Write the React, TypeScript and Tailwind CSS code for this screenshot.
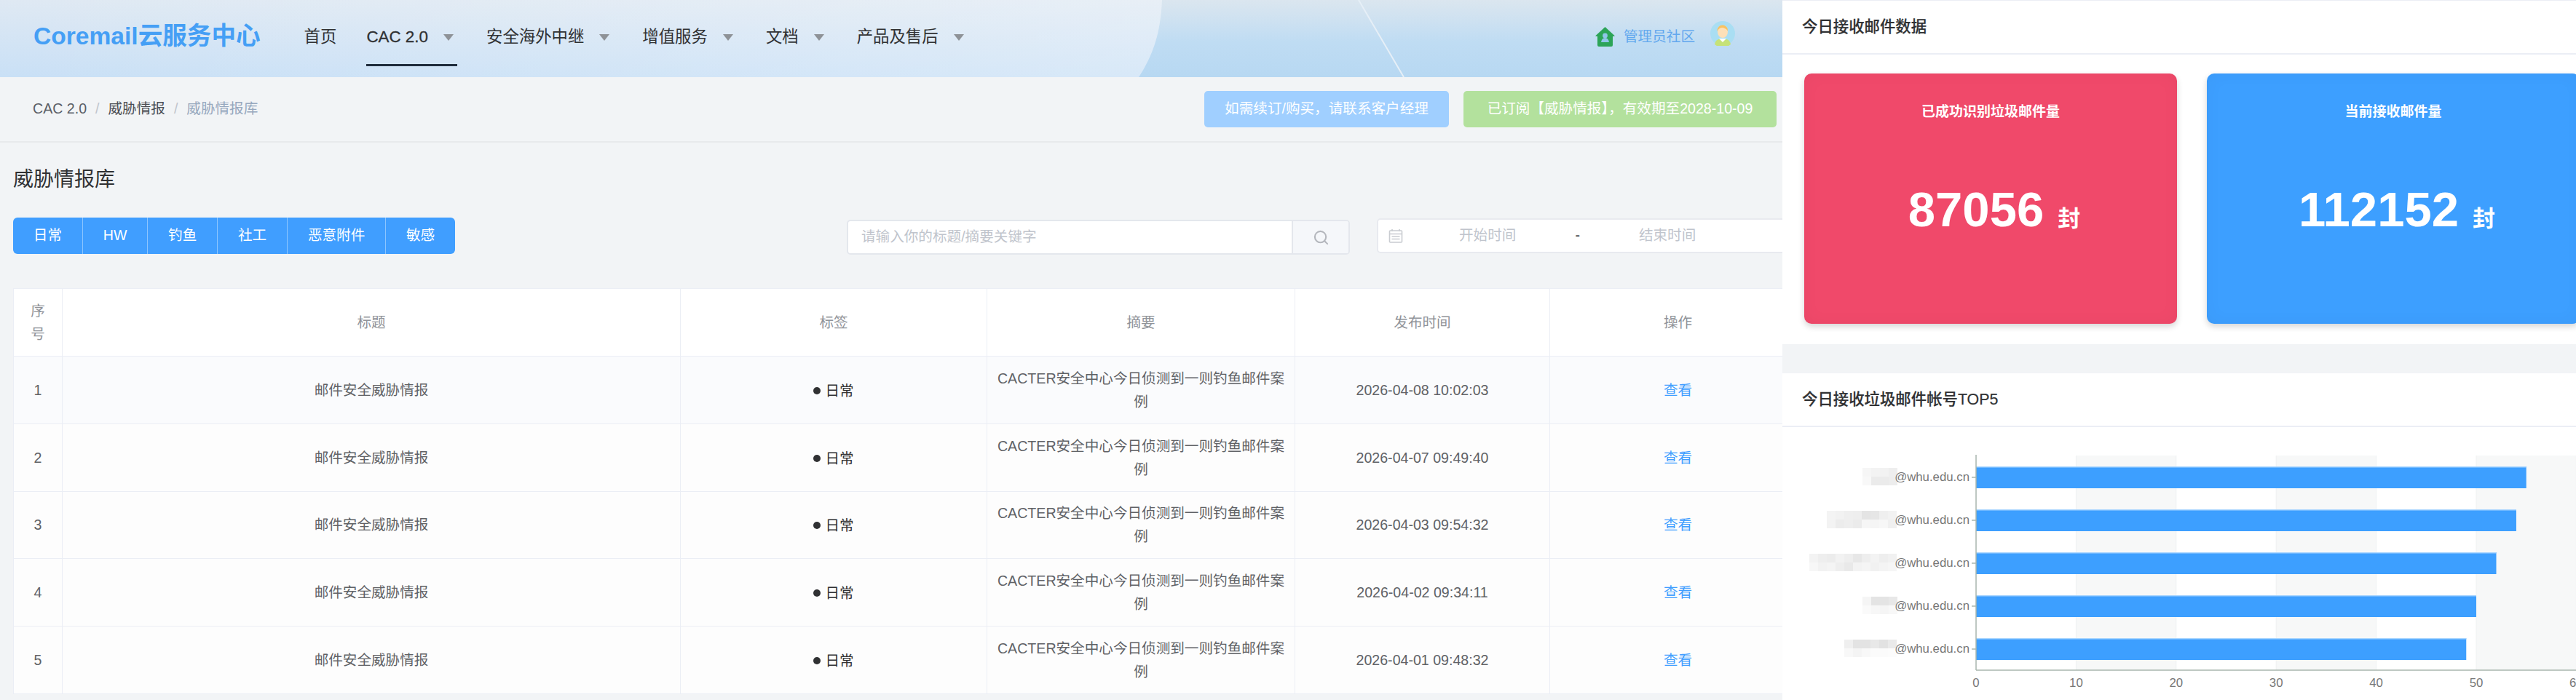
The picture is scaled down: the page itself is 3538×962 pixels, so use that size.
import { Search } from 'lucide-react';

const fontStack = '[font-family:"Liberation_Sans","Noto_Sans_CJK_SC",sans-serif]';

const navItems = ['安全海外中继', '增值服务', '文档', '产品及售后'];
const tagButtons = ['日常', 'HW', '钓鱼', '社工', '恶意附件', '敏感'];

const rows = [
  { id: 1, time: '2026-04-08 10:02:03' },
  { id: 2, time: '2026-04-07 09:49:40' },
  { id: 3, time: '2026-04-03 09:54:32' },
  { id: 4, time: '2026-04-02 09:34:11' },
  { id: 5, time: '2026-04-01 09:48:32' },
];

const chartOrigin = 266;
const unit = 13.74;
const chartBars = [
  { y: 54, value: 55, mosaicX: 110, mosaic: [['#f6f6f6', '#f3f3f3', '#f2f2f2', '#eeeeee'], ['#f8f8f8', '#ebebeb', '#ebebeb', '#ededed']] },
  { y: 113, value: 54, mosaicX: 61, mosaic: [['#f4f4f4', '#f2f2f2', '#efefef', '#eeeeee', '#e4e4e4', '#e6e6e6', '#efefef', '#f2f2f2'], ['#f3f3f3', '#ececec', '#eeeeee', '#ebebeb', '#f6f6f6', '#f5f5f5', '#f7f7f7', '#f0f0f0']] },
  { y: 172, value: 52, mosaicX: 37, mosaic: [['#f3f3f3', '#eeeeee', '#ececec', '#f2f2f2', '#eeeeee', '#e7e7e7', '#eeeeee', '#f3f3f3', '#eeeeee', '#f1f1f1'], ['#f7f7f7', '#f2f2f2', '#f4f4f4', '#eeeeee', '#e9e9e9', '#f3f3f3', '#f5f5f5', '#f1f1f1', '#f4f4f4', '#f6f6f6']] },
  { y: 231, value: 50, mosaicX: 110, mosaic: [['#f5f5f5', '#e4e4e4', '#e4e4e4', '#e8e8e8'], ['#fafafa', '#f7f7f7', '#f5f5f5', '#f8f8f8']] },
  { y: 290, value: 49, mosaicX: 85, mosaic: [['#efefef', '#e3e3e3', '#e3e3e3', '#e8e8e8', '#e2e2e2', '#eaeaea'], ['#f8f8f8', '#f4f4f4', '#f8f8f8', '#fbfbfb', '#fbfbfb', '#fcfcfc']] },
];

function Caret() {
  return <span className="ml-[21px] h-0 w-0 border-x-[7px] border-t-[9px] border-x-transparent border-t-[#8e9297]" />;
}

function CommunityIcon() {
  return (
    <svg width="27" height="27" viewBox="0 0 27 27">
      <path d="M13.5 0L27 12.5L24 13V25a2 2 0 0 1-2 2H5a2 2 0 0 1-2-2V13L0 12.5Z" fill="#2ca457" />
      <circle cx="13.5" cy="12" r="3.4" fill="#8fc6e8" />
      <path d="M8 21c.6-4 2.6-6 5.5-6s4.900 2 5.500 6Z" fill="#8fc6e8" />
    </svg>
  );
}

function Avatar() {
  return (
    <svg width="34" height="34" viewBox="0 0 34 34" className="-mt-[8px]">
      <circle cx="17" cy="17" r="17" fill="#a9def3" />
      <path d="M6 32c1-6 5-8 11-8s10 2 11 8a17 17 0 0 1-22 0Z" fill="#c6e278" />
      <path d="M12 24h10l-5 5Z" fill="#fff" />
      <ellipse cx="17" cy="15" rx="7" ry="8" fill="#fde0b8" />
      <path d="M9.500 14c0-6 4-9 8-8.500 4 .5 7 4 6.500 8-2-3-5-4.500-8-4.500-3 .5-5 2-6.500 5Z" fill="#f8c260" />
    </svg>
  );
}

function CalendarIcon() {
  return (
    <svg width="20" height="20" viewBox="0 0 20 20" fill="none" stroke="#c9ccd1" strokeWidth="1.600">
      <rect x="1.500" y="3" width="17" height="16" rx="1" />
      <path d="M5 1v3M15 1v3M1.500 7.500h17M4.500 11h11M4.500 14.500h11" />
    </svg>
  );
}

function TopBar() {
  return (
    <header className="relative flex h-[106px] items-start overflow-hidden bg-gradient-to-b from-[#dfe9f3] to-[#c9e0f6] pl-[46px] pr-[65px]">
      <svg className="absolute inset-0" width="2448" height="106" viewBox="0 0 2448 106">
        <defs>
          <linearGradient id="fadeArea" x1="0" y1="0" x2="1" y2="0">
            <stop offset="0" stopColor="#ffffff" stopOpacity="0" />
            <stop offset="1" stopColor="#ffffff" stopOpacity="0.28" />
          </linearGradient>
          <linearGradient id="blueArea" x1="0" y1="0" x2="0" y2="1">
            <stop offset="0" stopColor="#dbe6ef" />
            <stop offset="0.55" stopColor="#bfdcf3" />
            <stop offset="1" stopColor="#b7d8f2" />
          </linearGradient>
        </defs>
        <path d="M1596 0C1594 45 1584 75 1564 106H2448V0Z" fill="url(#blueArea)" />
        <path d="M0 0H1596C1594 45 1584 75 1564 106H0Z" fill="url(#fadeArea)" />
        <path d="M1866 0L1928 106" stroke="#e6eff7" strokeWidth="2" fill="none" />
      </svg>
      <div className="relative flex w-full items-start">
        <div className="mt-[29px] text-[33.6px] leading-[42px] font-bold text-[#459ff5]">Coremail云服务中心</div>
        <nav className="ml-[60px] flex gap-[41px] text-[22.4px] text-[#303133]">
          <a className="flex h-[91px] items-center pt-[11px]">首页</a>
          <a className="flex h-[91px] items-center border-b-[3px] border-[#1f2d3d] pt-[14px] pr-[5px] font-medium [-webkit-text-stroke:0.3px_#303133]">
            CAC 2.0
            <Caret />
          </a>
          {navItems.map((item) => (
            <a key={item} className="-ml-[1px] flex h-[91px] items-center pt-[11px] pr-[5px]">
              {item}
              <Caret />
            </a>
          ))}
        </nav>
        <div className="mt-[37px] ml-auto flex items-start">
          <CommunityIcon />
          <span className="ml-[12px] text-[19.6px] leading-[27px] text-[#62a8ee]">管理员社区</span>
          <span className="ml-[21px]">
            <Avatar />
          </span>
        </div>
      </div>
    </header>
  );
}

function BreadcrumbBar() {
  return (
    <div className="flex h-[90px] items-center border-b-2 border-[#e8eaec] pr-[8px] pl-[45px] text-[19.6px]">
      <span className="text-[#5a5e66]">CAC 2.0</span>
      <span className="mx-[12px] text-[#c0c4cc]">/</span>
      <span className="text-[#4a4d53]">威胁情报</span>
      <span className="mx-[12px] text-[#c0c4cc]">/</span>
      <span className="text-[#97a8be]">威胁情报库</span>
      <div className="ml-auto flex gap-[20px] text-white">
        <div className="flex h-[50px] w-[336px] items-center justify-center rounded-[5px] bg-[#a0cfff]">如需续订/购买，请联系客户经理</div>
        <div className="flex h-[50px] w-[430px] items-center justify-center rounded-[5px] bg-[#b3e19d]">已订阅【威胁情报】，有效期至2028-10-09</div>
      </div>
    </div>
  );
}

function FilterRow() {
  return (
    <div className="mt-[34px] flex w-[2600px] items-start text-[19.6px]">
      <div className="flex h-[50px] w-[607px] shrink-0 overflow-hidden rounded-[6px] bg-[#409eff] text-white">
        {tagButtons.map((tag, i) => (
          <div
            key={tag}
            className={`flex h-full flex-auto items-center justify-center ${i < tagButtons.length - 1 ? 'border-r border-[#8cc5ff]' : ''}`}
          >
            {tag}
          </div>
        ))}
      </div>
      <div className="mt-[3px] ml-[538px] flex h-[48px] w-[691px] shrink-0 overflow-hidden rounded-[5px] border-2 border-[#e4e7ed] bg-white">
        <div className="flex flex-1 items-center pl-[18px] text-[#c0c4cc]">请输入你的标题/摘要关键字</div>
        <div className="flex w-[78px] items-center justify-center border-l-2 border-[#e4e7ed] bg-[#f5f7fa] text-[#b4b7bd]">
          <Search size={23} strokeWidth={2.2} />
        </div>
      </div>
      <div className="mt-[1px] ml-[37px] flex h-[48px] w-[700px] shrink-0 items-center rounded-[5px] border-2 border-[#e8eaef] bg-white pl-[14px] text-[#c0c4cc]">
        <CalendarIcon />
        <span className="ml-[77px]">开始时间</span>
        <span className="ml-[81px] text-[#303133]">-</span>
        <span className="ml-[81px]">结束时间</span>
      </div>
    </div>
  );
}

function IntelTable() {
  const th = 'border border-[#ebeef5] px-[14px] font-normal text-[#909399]';
  const cell = 'border border-[#ebeef5] px-[10px] text-center';
  return (
    <table className="mt-[46px] w-[2462px] table-fixed border-collapse bg-white text-[19.6px] leading-[32px]">
      <colgroup>
        <col className="w-[67px]" />
        <col className="w-[849px]" />
        <col className="w-[421px]" />
        <col className="w-[423px]" />
        <col className="w-[350px]" />
        <col className="w-[352px]" />
      </colgroup>
      <thead>
        <tr className="h-[93px]">
          <th className={th}>序号</th>
          <th className={th}>标题</th>
          <th className={th}>标签</th>
          <th className={th}>摘要</th>
          <th className={th}>发布时间</th>
          <th className={th}>操作</th>
        </tr>
      </thead>
      <tbody>
        {rows.map((row) => (
          <tr key={row.id} className={`h-[92.8px] text-[#606266] ${row.id === 1 ? 'bg-[#fafbfd]' : 'bg-[#fdfdfd]'}`}>
            <td className={cell}>{row.id}</td>
            <td className={cell}>邮件安全威胁情报</td>
            <td className={cell}>
              <span className="inline-flex items-center text-[#303133]">
                <span className="mr-[6px] h-[10px] w-[10px] rounded-full bg-[#303133]" />
                日常
              </span>
            </td>
            <td className={cell}>CACTER安全中心今日侦测到一则钓鱼邮件案例</td>
            <td className={cell}>{row.time}</td>
            <td className={cell}>
              <a className="text-[#409eff]">查看</a>
            </td>
          </tr>
        ))}
      </tbody>
    </table>
  );
}

function StatCard({ label, value, color }: { label: string; value: string; color: string }) {
  return (
    <div className={`flex h-[344px] w-[512px] shrink-0 flex-col items-center rounded-[10px] pt-[39px] text-white shadow-[0_4px_8px_rgba(0,0,0,0.16),inset_0_0_24px_rgba(0,0,0,0.035)] ${color}`}>
      <div className="text-[19px] leading-[28px] font-bold">{label}</div>
      <div className="mt-[80px] ml-[10px] flex items-baseline font-bold">
        <span className="text-[67px] leading-[80px]">{value}</span>
        <span className="ml-[19px] text-[31px]">封</span>
      </div>
    </div>
  );
}

function TopFiveChart() {
  const xTicks = [0, 10, 20, 30, 40, 50, 60];
  return (
    <svg width="1090" height="372" viewBox="0 0 1090 372" className="block">
      {[1, 3, 5].map((n) => (
        <rect key={n} x={chartOrigin + n * 137.4} y="39" width="137.4" height="295" fill="#f7f8f8" />
      ))}
      {xTicks.slice(1).map((t) => (
        <line key={t} x1={chartOrigin + t * unit} x2={chartOrigin + t * unit} y1="39" y2="334" stroke="#eff1f2" />
      ))}
      {chartBars.map((bar) => (
        <g key={bar.y}>
          {bar.mosaic.map((cells, r) =>
            cells.map((fill, c) => (
              <rect key={`${r}-${c}`} x={bar.mosaicX + c * 12} y={bar.y + 2 + r * 12} width="12" height="12" fill={fill} />
            )),
          )}
          <text x="257" y={bar.y + 20} textAnchor="end" fontSize="16.8" fill="#777">
            @whu.edu.cn
          </text>
          <line x1="260" x2="266" y1={bar.y + 15} y2={bar.y + 15} stroke="#a9b6ae" strokeWidth="1.500" />
          <rect x={chartOrigin} y={bar.y} width={bar.value * unit} height="30" fill="#3d9fff" />
          <rect x={chartOrigin} y={bar.y} width={bar.value * unit} height="1.500" fill="#a6d4ff" />
        </g>
      ))}
      <line x1={chartOrigin} x2={chartOrigin} y1="38" y2="334" stroke="#a9b6ae" strokeWidth="1.500" />
      <line x1={chartOrigin} x2="1090" y1="334" y2="334" stroke="#a9b6ae" strokeWidth="1.500" />
      {xTicks.map((t) => (
        <text key={t} x={chartOrigin + t * unit} y="357" textAnchor="middle" fontSize="16.8" fill="#777">
          {t}
        </text>
      ))}
    </svg>
  );
}

function SideHeading({ children }: { children: string }) {
  return (
    <div className="flex h-[74px] items-center border-b-2 border-[#ebeef5] pl-[27px] text-[21.4px] font-medium text-[#303133] [-webkit-text-stroke:0.2px_#303133]">
      {children}
    </div>
  );
}

export default function App() {
  return (
    <div className={`flex h-[962px] w-[3538px] overflow-hidden bg-[#f2f4f6] ${fontStack}`}>
      <main className="h-full w-[2448px] shrink-0 overflow-hidden">
        <TopBar />
        <BreadcrumbBar />
        <div className="pl-[18px]">
          <h1 className="mt-[33px] text-[28px] leading-[36px] font-normal text-[#303133]">威胁情报库</h1>
          <FilterRow />
          <IntelTable />
        </div>
      </main>
      <aside className="h-full w-[1090px] shrink-0 overflow-hidden">
        <section className="h-[473px] border-t border-[#ebeef5] bg-white">
          <SideHeading>今日接收邮件数据</SideHeading>
          <div className="flex gap-[41px] pt-[26px] pl-[30px]">
            <StatCard label="已成功识别垃圾邮件量" value="87056" color="bg-[#f0496a]" />
            <StatCard label="当前接收邮件量" value="112152" color="bg-[#3d9fff]" />
          </div>
        </section>
        <section className="mt-[40px] h-[449px] bg-white">
          <SideHeading>今日接收垃圾邮件帐号TOP5</SideHeading>
          <TopFiveChart />
        </section>
      </aside>
    </div>
  );
}
